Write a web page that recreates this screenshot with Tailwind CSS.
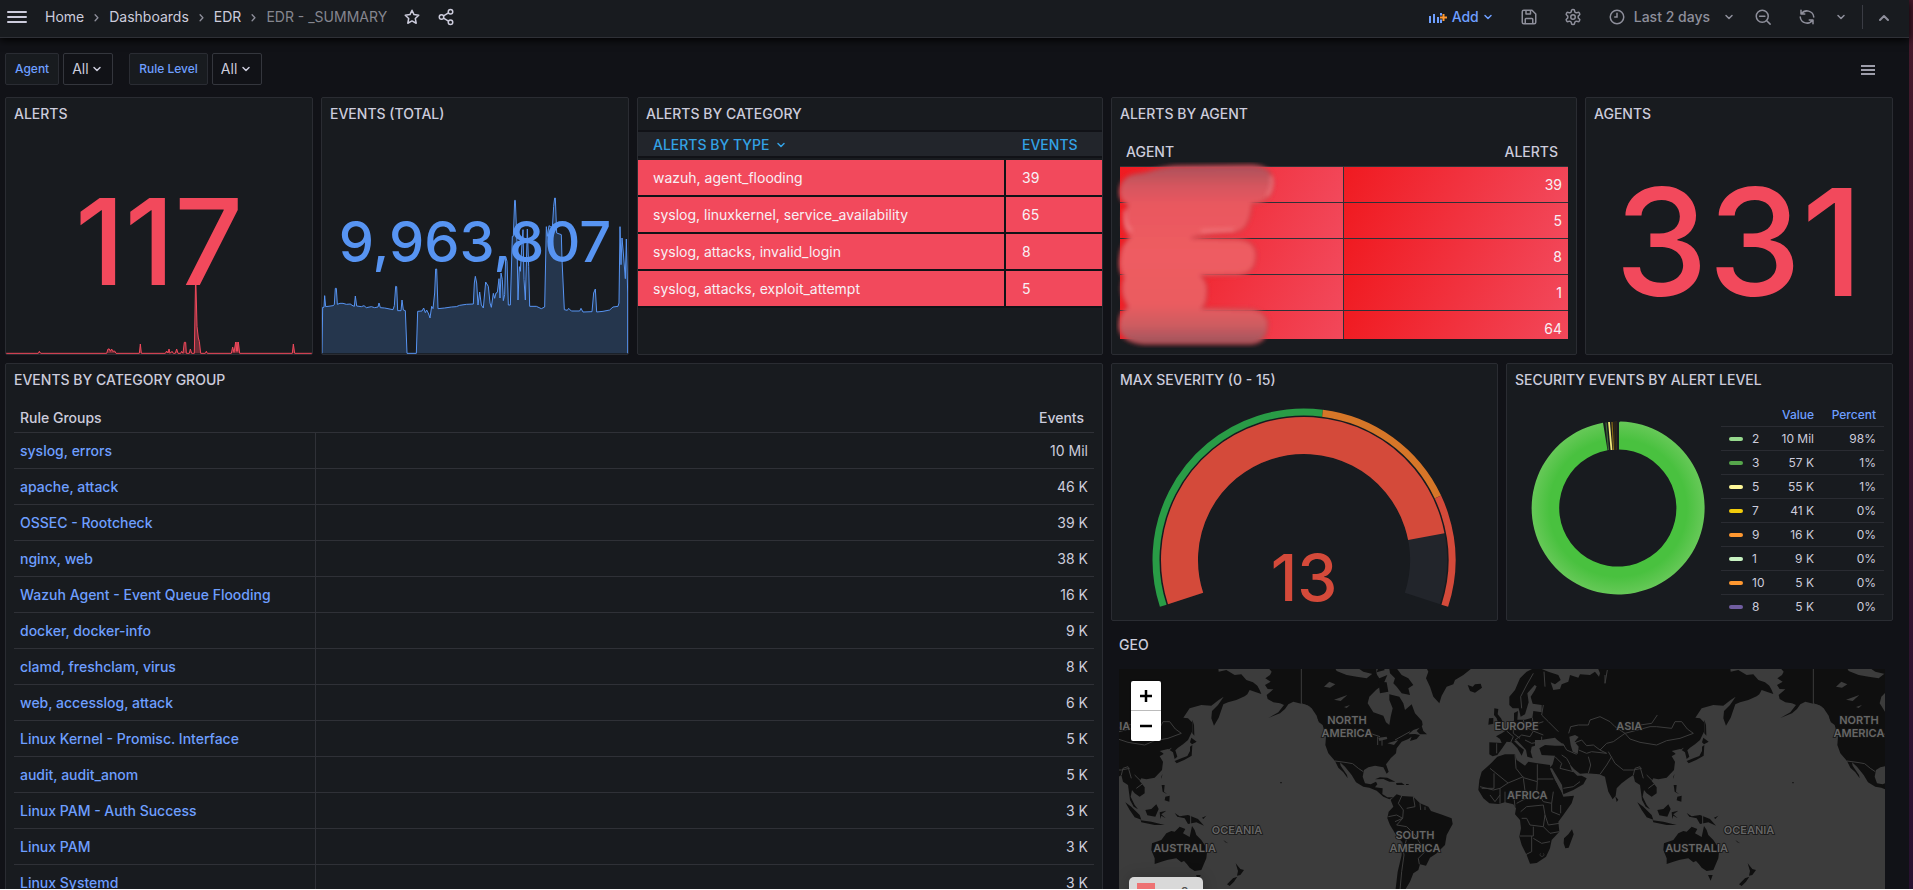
<!DOCTYPE html>
<html lang="en">
<head>
  <meta charset="UTF-8">
  <meta name="viewport" content="width=device-width, initial-scale=1.0">
  <title>EDR - _SUMMARY - Dashboards</title>
  <script src="https://cdn.jsdelivr.net/npm/@tailwindcss/browser@4"></script>
</head>
<body class="flex h-screen overflow-hidden border-b border-white bg-[#111217] font-['Inter',sans-serif] text-sm text-[#ccccdc]">

  <!-- Shared icons -->
  <svg class="hidden">
    <symbol id="chev-down" viewBox="0 0 16 16"><path d="M5 6.500 8 9.500l3-3" fill="none" stroke="currentColor" stroke-width="1.500" stroke-linecap="round" stroke-linejoin="round"/></symbol>
    <symbol id="chev-right" viewBox="0 0 16 16"><path d="M6.500 5 9.500 8.200 6.500 11.400" fill="none" stroke="currentColor" stroke-width="1.400" stroke-linecap="round" stroke-linejoin="round"/></symbol>
  </svg>

  <div class="flex min-w-0 flex-1 flex-col">
    <header class="relative z-10 flex h-[38px] shrink-0 items-center justify-between border-b border-[#2e3036] bg-[#181b1f] pb-[3px] pl-[5px] pr-[17px] shadow-[0_2px_8px_#000]">
      <nav class="flex items-center" aria-label="Breadcrumb">
        <button aria-label="Open menu" class="mr-4">
          <svg class="size-6" viewBox="0 0 24 24" stroke="currentColor" stroke-width="2" stroke-linecap="round"><path d="M3 7h18M3 12h18M3 17h18"/></svg>
        </button>
        <div class="flex items-center gap-[5px]">
          <a href="#">Home</a>
          <svg class="size-[15px] text-[#8e8f9b]"><use href="#chev-right"/></svg>
          <a href="#">Dashboards</a>
          <svg class="size-[15px] text-[#8e8f9b]"><use href="#chev-right"/></svg>
          <a href="#">EDR</a>
          <svg class="size-[15px] text-[#8e8f9b]"><use href="#chev-right"/></svg>
          <span class="text-[#85868f]">EDR - _SUMMARY</span>
        </div>
        <div class="ml-4 flex items-center gap-4">
          <button aria-label="Mark as favorite">
            <svg class="size-[18px]" viewBox="0 0 24 24" fill="none" stroke="currentColor" stroke-width="2" stroke-linejoin="round"><path d="M12 3l2.700 5.800 6.300.8-4.600 4.400 1.200 6.300L12 17.200l-5.600 3.100 1.200-6.300L3 9.600l6.300-.8z"/></svg>
          </button>
          <button aria-label="Share dashboard">
            <svg class="size-[18px]" viewBox="0 0 24 24" fill="none" stroke="currentColor" stroke-width="2"><circle cx="18" cy="5" r="3"/><circle cx="6" cy="12" r="3"/><circle cx="18" cy="19" r="3"/><path d="M8.700 10.500l6.600-4M8.700 13.500l6.600 4"/></svg>
          </button>
        </div>
      </nav>

      <div class="flex items-center text-[#8e8f9b]">
        <button class="flex items-center font-medium text-[#6e9fff]">
          <svg class="mr-1 size-5" viewBox="0 0 20 20" fill="none" stroke="currentColor" stroke-width="2"><path d="M2 9v7M6 7v9M10 10v6M13 12.500V16M13 6v2.500"/><path stroke="#ff9830" d="M12 10.500h7M15.500 7v7"/></svg>
          Add
          <svg class="ml-px size-4"><use href="#chev-down"/></svg>
        </button>
        <div class="ml-6 flex items-center gap-[26px]">
          <button aria-label="Save dashboard">
            <svg class="size-[18px]" viewBox="0 0 24 24" fill="none" stroke="currentColor" stroke-width="2" stroke-linejoin="round"><path d="M5 3h11l5 5v11a2 2 0 0 1-2 2H5a2 2 0 0 1-2-2V5a2 2 0 0 1 2-2zM8 3v5h6V3M7 21v-6a1 1 0 0 1 1-1h8a1 1 0 0 1 1 1v6"/></svg>
          </button>
          <button aria-label="Dashboard settings">
            <svg class="size-[18px]" viewBox="0 0 24 24" fill="none" stroke="currentColor" stroke-width="2"><path d="M12.220 2h-.44a2 2 0 0 0-2 2v.18a2 2 0 0 1-1 1.730l-.43.25a2 2 0 0 1-2 0l-.15-.08a2 2 0 0 0-2.730.73l-.22.38a2 2 0 0 0 .73 2.730l.15.1a2 2 0 0 1 1 1.720v.51a2 2 0 0 1-1 1.740l-.15.09a2 2 0 0 0-.73 2.730l.22.38a2 2 0 0 0 2.730.73l.15-.08a2 2 0 0 1 2 0l.43.25a2 2 0 0 1 1 1.730V20a2 2 0 0 0 2 2h.44a2 2 0 0 0 2-2v-.18a2 2 0 0 1 1-1.730l.43-.25a2 2 0 0 1 2 0l.15.08a2 2 0 0 0 2.730-.73l.22-.39a2 2 0 0 0-.73-2.730l-.15-.08a2 2 0 0 1-1-1.740v-.5a2 2 0 0 1 1-1.740l.15-.09a2 2 0 0 0 .73-2.730l-.22-.38a2 2 0 0 0-2.730-.73l-.15.08a2 2 0 0 1-2 0l-.43-.25a2 2 0 0 1-1-1.730V4a2 2 0 0 0-2-2z"/><circle cx="12" cy="12" r="3"/></svg>
          </button>
          <button class="flex items-center font-medium">
            <svg class="mr-2 size-[18px]" viewBox="0 0 24 24" fill="none" stroke="currentColor" stroke-width="2" stroke-linecap="round"><circle cx="12" cy="12" r="9"/><path d="M12 7v5H9"/></svg>
            Last 2 days
            <svg class="ml-[11px] size-4"><use href="#chev-down"/></svg>
          </button>
        </div>
        <button aria-label="Zoom out" class="ml-[17px]">
          <svg class="size-[18px]" viewBox="0 0 24 24" fill="none" stroke="currentColor" stroke-width="2" stroke-linecap="round"><circle cx="11" cy="11" r="8"/><path d="M17 17l4.500 4.500M7.500 11h7"/></svg>
        </button>
        <button aria-label="Refresh" class="ml-[26px]">
          <svg class="size-[18px]" viewBox="0 0 24 24" fill="none" stroke="currentColor" stroke-width="2" stroke-linecap="round" stroke-linejoin="round"><path d="M4 3v5h5M20 21v-5h-5M4.500 8A9 9 0 0 1 21 12M19.500 16A9 9 0 0 1 3 12"/></svg>
        </button>
        <button aria-label="Refresh interval" class="ml-[17px]">
          <svg class="size-4"><use href="#chev-down"/></svg>
        </button>
        <div class="ml-[13px] h-6 w-px bg-[#3a3c44]"></div>
        <button aria-label="Hide toolbar" class="ml-[13px]">
          <svg class="size-4" viewBox="0 0 16 16" fill="none" stroke="currentColor" stroke-width="2" stroke-linecap="round" stroke-linejoin="round"><path d="M4 11l4-4 4 4"/></svg>
        </button>
      </div>
    </header>

    <main class="flex-1 overflow-y-auto pb-8 pl-[5px] pr-4 [scrollbar-width:none]">
      <!-- Variables -->
      <div class="flex items-center justify-between pb-3 pt-[15px]">
        <div class="flex gap-4">
          <div class="flex gap-1">
            <label for="agent" class="flex h-8 items-center rounded-xs border border-[#2a2c33] bg-[#181b1f] px-[9px] text-xs font-medium text-[#6e9fff]">Agent</label>
            <div class="relative">
              <select id="agent" class="h-8 w-[50px] appearance-none rounded-xs border border-[#34363d] bg-[#111217] pl-2 text-sm"><option>All</option></select>
              <svg class="pointer-events-none absolute right-2 top-2 size-4"><use href="#chev-down"/></svg>
            </div>
          </div>
          <div class="flex gap-1">
            <label for="level" class="flex h-8 items-center rounded-xs border border-[#2a2c33] bg-[#181b1f] px-[9px] text-xs font-medium text-[#6e9fff]">Rule Level</label>
            <div class="relative">
              <select id="level" class="h-8 w-[50px] appearance-none rounded-xs border border-[#34363d] bg-[#111217] pl-2 text-sm"><option>All</option></select>
              <svg class="pointer-events-none absolute right-2 top-2 size-4"><use href="#chev-down"/></svg>
            </div>
          </div>
        </div>
        <button aria-label="Dashboard links" class="mr-[17px]">
          <svg class="size-4" viewBox="0 0 16 16" stroke="currentColor" stroke-width="1.500"><path d="M1 5h14M1 9h14M1 13h14"/></svg>
        </button>
      </div>

      <div class="grid auto-rows-[30px] grid-cols-24 gap-2">

        <section class="relative col-span-4 row-span-7 flex flex-col overflow-hidden rounded-xs border border-[#2a2c32] bg-[#181b1f]">
          <h2 class="flex h-8 shrink-0 items-center px-2 font-medium">ALERTS</h2>
          <div class="flex flex-1 items-center justify-center text-[120px] font-medium leading-none text-[#f2495c] [font-kerning:none]">117</div>
          <svg class="absolute bottom-0 left-0 h-[81px] w-full" viewBox="0 0 918 243" preserveAspectRatio="none">
            <path transform="translate(-18 -280)" fill="#f2495c" fill-opacity=".4" stroke="#f2495c" stroke-width="3" d="M18 521H115L118 515 122 521H320L324 508 328 508 331 515 335 508 338 515 344 514 348 521H418L421 493 424 521H496L500 514 504 520 507 508 510 521 516 515 520 521H526L530 508 534 521H542L545 515 549 521 553 488 557 488 559 521H568L571 508 575 521H583L587 283 591 440 595 475 598 485 602 521H616L619 515 622 521H694L698 502 702 518 707 487 709 515 711 487 713 515 715 487 719 521H877L880 493 884 521H936"/>
          </svg>
        </section>

        <section class="relative col-span-4 row-span-7 flex flex-col overflow-hidden rounded-xs border border-[#2a2c32] bg-[#181b1f]">
          <h2 class="flex h-8 shrink-0 items-center px-2 font-medium">EVENTS (TOTAL)</h2>
          <svg class="absolute bottom-0 left-0 h-[157px] w-full" viewBox="0 0 918 471" preserveAspectRatio="none">
            <path transform="translate(-12 -52)" fill="#5794f2" fill-opacity=".22" stroke="#5794f2" stroke-width="3" stroke-linejoin="round" d="M12 521L14 383 18 383 20 348 23 381 45 378 49 375 52 326 55 326 58 374 66 371 75 371 85 374 98 373 100 376 109 380 112 349 116 379 130 381 138 378 145 384 160 381 170 384 180 382 183 370 187 384 200 385 225 390 229 378 233 320 236 321 239 393 249 393 252 361 256 391 262 393 267 521 295 521 299 395 312 394 317 385 322 399 326 391 332 403 336 415 341 380 345 387 350 340 353 268 356 268 360 387 380 385 400 382 415 381 425 377 445 374 466 373 469 310 472 290 476 310 480 376 485 337 490 376 496 385 503 307 511 320 516 370 520 383 526 341 530 356 534 340 538 338 543 297 546 355 549 280 553 300 556 363 560 345 563 231 567 245 571 376 577 376 583 170 586 170 590 62 592 62 597 190 600 361 604 261 607 275 612 190 615 150 618 300 622 361 628 148 632 260 635 380 655 380 670 387 680 382 685 141 688 170 693 138 703 145 707 80 710 55 712 55 716 160 730 165 732 240 739 390 748 392 752 386 760 394 785 394 789 386 795 397 822 396 827 340 832 328 836 397 855 395 875 391 885 382 900 380 903 370 906 141 909 255 912 175 916 220 922 297 925 178 929 340V521"/>
          </svg>
          <div class="relative flex flex-1 items-center justify-center text-[56px] font-medium leading-none text-[#5794f2]">9,963,807</div>
        </section>

        <section class="col-span-6 row-span-7 overflow-hidden rounded-xs border border-[#2a2c32] bg-[#181b1f]">
          <h2 class="flex h-8 items-center px-2 font-medium">ALERTS BY CATEGORY</h2>
          <table class="w-full border-separate border-spacing-0 text-left">
            <thead class="text-[#33a2e5]">
              <tr class="h-7">
                <th class="border-y-2 border-[#111217] bg-[#22252b] pl-[15px] pt-[2px] font-medium">
                  <span class="flex items-center gap-1">ALERTS BY TYPE <svg class="size-4"><use href="#chev-down"/></svg></span>
                </th>
                <th class="w-24 border-y-2 border-[#111217] bg-[#22252b] pl-4 pt-[2px] font-medium">EVENTS</th>
              </tr>
              <tr class="h-[2px]"><td colspan="2"></td></tr>
            </thead>
            <tbody id="categories" class="text-[#f7f0f5]"></tbody>
          </table>
        </section>

        <section class="col-span-6 row-span-7 rounded-xs border border-[#2a2c32] bg-[#181b1f]">
          <h2 class="flex h-8 items-center px-2 font-medium">ALERTS BY AGENT</h2>
          <div class="relative mx-2">
            <div class="h-[209px] overflow-hidden">
              <table class="w-full table-fixed border-separate border-spacing-0">
                <thead>
                  <tr class="h-9">
                    <th class="px-[6px] pt-2 text-left font-medium">AGENT</th>
                    <th class="px-[10px] pt-2 text-right font-medium">ALERTS</th>
                  </tr>
                </thead>
                <tbody id="agents" class="text-[#f7f0f5]"></tbody>
              </table>
            </div>
            <!-- Redacted agent names -->
            <svg class="absolute -left-1 top-8 h-[186px] w-[164px]" viewBox="0 0 164 186">
              <defs>
                <linearGradient id="smudge" x1="0" y1="0" x2="0" y2="1">
                  <stop offset="0" stop-color="#a9505a"/><stop offset=".12" stop-color="#d6565e"/><stop offset=".22" stop-color="#e9585f"/>
                  <stop offset=".5" stop-color="#ee5c62"/><stop offset=".78" stop-color="#ea5c61"/><stop offset=".9" stop-color="#cc5b60"/><stop offset="1" stop-color="#9d555c"/>
                </linearGradient>
                <filter id="soft"><feGaussianBlur stdDeviation="2"/></filter>
              </defs>
              <path filter="url(#soft)" fill="url(#smudge)" stroke="#c83a42" stroke-width="1.500" d="M20 12C35 11 40 5 60 4L135 3Q158 4 157 22 156 41 136 42 134 66 122 70 95 71 75 76L120 77Q141 78 140 95 139 112 122 113L85 114Q92 120 91 130 91 142 86 146L135 147Q153 150 152 164 151 181 134 182L28 182Q4 180 3 164 3 150 12 145 2 130 8 115 2 108 4 95 5 82 14 75 6 68 8 56 9 48 12 43 2 38 4 27 6 14 20 12Z"/>
              <path filter="url(#soft)" fill="none" stroke="#f58087" stroke-width="2" d="M155 14Q158 25 151 34M9 48Q8 64 16 69M85 69 118 68"/>
            </svg>
          </div>
        </section>

        <section class="col-span-4 row-span-7 flex flex-col rounded-xs border border-[#2a2c32] bg-[#181b1f]">
          <h2 class="flex h-8 shrink-0 items-center px-2 font-medium">AGENTS</h2>
          <div class="flex flex-1 items-center justify-center text-[149px] font-medium leading-none text-[#f2495c] [font-kerning:none]">331</div>
        </section>

        <section class="col-span-14 row-span-16 overflow-hidden rounded-xs border border-[#2a2c32] bg-[#181b1f] px-2">
          <h2 class="flex h-8 items-center font-medium">EVENTS BY CATEGORY GROUP</h2>
          <table class="w-full border-separate border-spacing-0">
            <thead>
              <tr class="h-[37px]">
                <th class="w-[302px] border-b border-[#2f3137] px-[6px] pt-2 text-left font-medium">Rule Groups</th>
                <th class="border-b border-[#2f3137] px-[10px] pt-2 text-right font-medium">Events</th>
              </tr>
            </thead>
            <tbody id="groups"></tbody>
          </table>
        </section>

        <section class="col-span-5 row-span-7 rounded-xs border border-[#2a2c32] bg-[#181b1f]">
          <h2 class="flex h-8 items-center px-2 font-medium">MAX SEVERITY (0 - 15)</h2>
          <!-- 216 degree gauge, thresholds at 8 and 12 -->
          <svg class="mx-auto mt-3 h-[204px] w-[306px] overflow-visible" viewBox="0 0 306 204">
            <g fill="none" transform="rotate(162 152 152)">
              <circle cx="152" cy="152" r="148" pathLength="360" stroke-width="7" stroke="#299c46" stroke-dasharray="115.200 360"/>
              <circle cx="152" cy="152" r="148" pathLength="360" stroke-width="7" stroke="#d67628" stroke-dasharray="57.600 360" stroke-dashoffset="-115.200"/>
              <circle cx="152" cy="152" r="148" pathLength="360" stroke-width="7" stroke="#d44a3a" stroke-dasharray="43.200 360" stroke-dashoffset="-172.800"/>
              <circle cx="152" cy="152" r="124.500" pathLength="360" stroke-width="37" stroke="#22252b" stroke-dasharray="216 360"/>
              <circle cx="152" cy="152" r="124.500" pathLength="360" stroke-width="37" stroke="#d44a3a" stroke-dasharray="187.200 360"/>
            </g>
            <text x="152" y="193" text-anchor="middle" class="text-[64px] font-medium [font-kerning:none]" fill="#d44a3a">13</text>
          </svg>
        </section>

        <section class="col-span-5 row-span-7 rounded-xs border border-[#2a2c32] bg-[#181b1f]">
          <h2 class="flex h-8 items-center px-2 font-medium">SECURITY EVENTS BY ALERT LEVEL</h2>
          <div class="flex items-start justify-between pl-[23px] pr-2">
            <svg class="mt-6 size-[176px]" viewBox="-88 -88 176 176">
              <defs>
                <radialGradient id="pie" gradientUnits="userSpaceOnUse" cx="0" cy="0" r="88">
                  <stop offset=".78" stop-color="#49c13f"/><stop offset="1" stop-color="#69c95a"/>
                </radialGradient>
              </defs>
              <path fill="url(#pie)" d="M2.500-86.500A86.500 86.500 0 1 1-15-85.200L-10.500-57.700A58.600 58.600 0 1 0 1-58.600V-85Q1-86.500 2.500-86.500Z"/>
              <path stroke="#3d6b35" stroke-width="1.200" d="M-12-85.500-9.500-58"/>
              <path stroke="#f3e77c" stroke-width="1.800" d="M-9-86-6.500-58"/>
              <path stroke="#8a6b14" stroke-width="1.200" d="M-6-86-4.500-58"/>
              <path stroke="#3a2a14" d="M-4-86.500-3-58M-2-87-1.500-58"/>
            </svg>
            <table class="mt-2 w-[163px] border-separate border-spacing-0 text-right text-xs">
              <thead class="font-medium text-[#6e9fff]">
                <tr class="h-[22px]">
                  <th class="w-5"></th><th class="w-6"></th>
                  <th class="pr-2 font-medium">Value</th>
                  <th class="w-[62px] pr-2 font-medium">Percent</th>
                </tr>
              </thead>
              <tbody id="levels"></tbody>
            </table>
          </div>
        </section>

        <section class="col-span-10 row-span-9 overflow-hidden px-2">
          <h2 class="mb-2 flex h-8 items-center font-medium">GEO</h2>
          <div class="relative overflow-hidden bg-[#3c3c3c]">
            <svg class="block w-full" viewBox="57 132 2298 840">
              <defs>
                <g id="world">
                  <g fill="#0f0f0f">
                    <path d="M497 120L515 140 510 150 496 160 512 170 495 180 503 192 520 193 500 210 503 222 520 232 540 235 552 240 535 262 505 279 540 265 555 252 565 238 580 230 604 236 620 240 635 250 650 272 655 290 668 300 678 335 676 360 685 385 705 408 715 428 730 442 743 460 741 450 722 422 720 412 735 425 755 450 768 472 790 485 808 488 830 497 850 515 868 523 880 517 862 517 847 507 848 490 825 487 832 478 828 470 812 478 795 475 788 455 792 435 805 427 825 422 850 427 860 446 866 440 858 418 872 400 888 385 890 370 905 350 925 342 935 335 930 348 950 342 960 330 945 327 925 328 940 315 960 308 968 300 966 288 945 265 935 238 915 255 910 235 898 215 868 208 868 225 878 250 872 275 868 300 858 292 850 272 820 262 803 235 808 215 828 195 850 178 862 150 838 160 825 140 800 160 770 155 740 150 710 138 700 120Z"/>
                    <path d="M950 318L965 302 970 318 981 328 960 328ZM866 120L890 130 905 150 925 160 940 180 925 190 930 210 905 205 890 185 880 175 885 160 870 145ZM838 120 855 135 830 142ZM835 170 860 172 865 200 840 205ZM760 120 790 140 830 150 828 120Z"/>
                    <path d="M975 120L985 140 978 160 990 185 1000 215 1018 235 1025 212 1040 185 1060 178 1065 165 1090 150 1115 130 1125 120ZM1103 180L1118 185 1125 178 1142 176 1146 188 1125 203 1110 198Z"/>
                    <path d="M825 463L840 457 862 458 886 470 868 470 850 462ZM888 474L905 473 914 480 890 480ZM918 477h8v3h-8ZM541 471h4v4h-4Z"/>
                    <path d="M872 525L890 508 905 513 940 515 960 535 985 545 993 558 1020 567 1055 580 1058 597 1040 630 1035 660 1010 685 990 698 978 722 960 718 955 735 940 745 930 770 915 795 905 850 890 850 886 800 893 740 905 690 905 650 885 625 870 600 862 580 866 560 880 545Z"/>
                    <path d="M1183 250L1195 252 1193 268 1203 280 1212 300 1208 308 1186 312 1195 295 1190 280 1182 270ZM1167 280L1180 279 1180 296 1165 299Z"/>
                  </g>
                  <g fill="#0f0f0f" transform="translate(1200 0)">
                    <path d="M-32 352L5 354 0 342-12 334 5 325 20 315 30 305 40 295 42 285 42 264 54 258 52 284 75 284 97 278 100 258 125 262 125 240 98 236 92 215 105 195 110 184 104 180 82 205 86 232 75 268 62 275 56 250 38 250 28 240 28 215 45 195 60 160 80 140 100 130 125 132 145 140 175 150 182 165 165 178 152 172 160 195 180 192 185 178 205 170 210 150 235 158 240 148 270 150 285 140 297 155 300 145 290 120 690 120 692 140 715 135 740 150 760 148 775 165 795 172 808 182 815 195 820 207 800 200 785 195 778 208 770 214 745 225 720 232 706 238 700 255 692 278 678 302 670 280 672 258 690 240 707 215 692 225 670 242 640 240 605 250 586 278 600 280 612 292 612 320 600 345 585 358 570 368 562 376 568 395 560 402 555 382 540 372 515 378 528 386 515 394 525 410 522 435 500 458 475 463 460 460 455 468 470 487 470 505 455 515 440 505 432 495 428 515 440 540 450 553 437 545 426 525 420 480 405 470 400 450 385 460 365 475 350 490 347 512 338 523 325 500 318 470 315 455 298 448 260 445 240 446 222 432 208 416 215 436 232 452 245 452 260 460 250 478 220 495 190 508 180 480 165 450 150 428 158 418 165 392 125 390 118 370 135 360 165 362 195 362 172 345 165 338 140 342 125 345 105 345 105 362 95 365 92 380 98 400 82 395 78 375 62 358 50 346 42 348 58 364 72 374 65 392 52 370 35 352 20 350 5 372-8 390-22 394-32 388Z"/>
                    <path d="M-8 395L15 388 45 388 50 405 75 422 85 410 112 415 150 420 152 436 165 465 180 490 190 515 222 512 215 535 190 570 175 590 178 620 155 645 150 670 138 695 110 714 90 716 80 690 65 660 58 635 63 610 60 585 45 568 48 550 40 538 15 532-5 537-32 535-50 520-65 495-62 465-55 440-30 418Z"/>
                    <path d="M192 640L205 628 216 613 221 628 206 668 196 670 191 655ZM346 514L355 524 350 531ZM520 455L523 447 521 462ZM560 408L580 400 598 393 606 378 606 365 613 360 611 392 590 404 566 415ZM606 352L610 338 626 350 612 358ZM613 284L618 300 619 332 613 325Z"/>
                    <path d="M521 480L530 480 528 500 538 508 524 500ZM532 515L545 512 544 530 530 526ZM412 532L430 545 455 570 460 584 440 577 425 555ZM458 586L490 590 530 600 500 600 460 592ZM472 555L490 552 505 538 512 552 502 575 478 571ZM515 562L535 557 520 568 533 580 520 572 517 582ZM560 564L575 574 600 570 630 582 648 602 625 592 600 597 590 580 568 575ZM642 578 655 572 646 582Z"/>
                    <path d="M492 655L520 645 535 625 550 618 560 620 575 605 592 612 585 625 605 636 612 603 620 615 625 630 640 645 658 672 655 700 640 735 620 738 605 728 597 718 588 708 580 712 565 700 540 704 520 710 500 717 500 700 490 675ZM624 750L638 750 632 767ZM743 715L757 732 768 735 757 750 747 752 750 738ZM748 755L738 770 725 783 717 778 735 760ZM706 645L720 655 712 652Z"/>
                  </g>
                  <!-- Lakes and inland seas -->
                  <g fill="#3c3c3c">
                    <path d="M672 185L688 170 706 178 690 188ZM702 224L742 210 722 228ZM732 246L750 240 740 249ZM835 338L860 335 862 342 838 348ZM862 355L895 345 882 360ZM1408 335L1425 330 1436 336 1424 350 1436 365 1433 387 1418 380 1412 360ZM1350 430L1356 430 1386 480 1390 508 1378 490Z"/>
                  </g>
                  <g fill="none" stroke="#3c3c3c" stroke-width="3" stroke-linejoin="round">
                    <path d="M604 120V236L628 245 655 290M833 335V360M846 340V362M705 408L735 412 758 416 775 430 790 440M810 325L840 335M885 345 930 320"/>
                    <path d="M905 513L895 535 910 555 908 580 885 590M865 575L890 570 908 580 890 600 920 605 945 630 960 655 975 680 955 700 958 718M905 650L912 690 905 740 895 850M920 640L915 660 930 680M940 515L945 545 920 550M960 535 962 555M975 545V555"/>
                    <path d="M1406 325L1412 305 1435 300 1465 300 1470 285 1500 275 1530 290 1545 305 1575 325 1540 350 1520 355 1500 375 1480 360 1460 362 1445 345 1420 355M1575 325L1590 342 1620 352 1670 360 1700 347 1740 340 1780 325 1762 312 1745 290 1725 290 1715 310 1670 305 1650 305 1575 325M1525 380L1545 415 1570 435 1600 435 1625 430M1620 300L1655 295 1672 270M1515 150V175L1522 135"/>
                    <path d="M1436 375L1460 385 1475 380 1520 385 1500 375M1465 445L1472 420 1465 395M1500 448L1520 420 1535 395M1385 390L1400 400 1410 418M1365 395L1385 415 1380 430 1420 440M1390 490L1420 485 1440 470M1600 450L1605 430 1620 425 1630 460M1640 450 1665 475 1645 490M1808 570V597M1725 385 1750 370"/>
                    <path d="M1245 388L1248 430 1270 458 1312 470V418M1312 462H1360M1170 430L1224 474 1270 455M1182 445V490H1145M1140 485 1180 495 1200 490 1224 474M1200 490V535M1215 500V535M1245 545 1240 500M1270 460 1278 520 1250 535M1312 470L1310 500 1330 530 1355 535 1360 500M1355 535V560L1380 570M1265 580H1280L1290 600 1330 605 1335 570 1330 540 1280 545 1262 560M1260 633H1300V605M1295 633V680L1275 690M1300 640 1325 655 1350 650M1330 605 1350 625 1378 620M1335 570 1345 600 1378 595M1382 540V565M1170 510 1185 530 1200 510"/>
                    <path d="M1265 250L1262 215 1280 180 1300 145M1332 140 1335 185M1330 240L1325 270 1345 290 1375 320M1297 278L1300 300 1330 290M1240 295V325L1260 340M1220 318 1240 335 1232 352M1270 285 1275 305 1300 318 1290 335 1265 330 1245 345M1300 318 1330 330M1325 335V350L1295 355 1275 345M1388 355 1400 375 1430 388M1190 355V385"/>
                    <path stroke-width="2" d="M1323 685a6 5 0 1 0 6 0"/>
                  </g>
                  <g class="text-[33px] font-semibold" fill="#666" stroke="#161616" stroke-width="5" paint-order="stroke" text-anchor="middle">
                    <text x="741" y="298">NORTH</text>
                    <text x="741" y="335">AMERICA</text>
                    <text x="945" y="643">SOUTH</text>
                    <text x="945" y="681">AMERICA</text>
                    <text x="1250" y="316">EUROPE</text>
                    <text x="1282" y="521">AFRICA</text>
                    <text x="1588" y="316">ASIA</text>
                    <text x="1790" y="682">AUSTRALIA</text>
                    <text x="1947" y="626">OCEANIA</text>
                  </g>
                </g>
              </defs>
              <use href="#world" x="-1536"/>
              <use href="#world"/>
              <use href="#world" x="1536"/>
            </svg>
            <div class="absolute left-3 top-3 w-[30px] divide-y divide-[#bbb] rounded-xs bg-white text-black shadow-[0_0_2px_#000]">
              <button aria-label="Zoom in" class="flex h-[30px] w-full items-center justify-center">
                <svg class="size-4" viewBox="0 0 16 16" stroke="currentColor" stroke-width="2.500"><path d="M2 8h12M8 2v12"/></svg>
              </button>
              <button aria-label="Zoom out of map" class="flex h-[30px] w-full items-center justify-center">
                <svg class="size-4" viewBox="0 0 16 16" stroke="currentColor" stroke-width="2.500"><path d="M2 8h12"/></svg>
              </button>
            </div>
            <div class="absolute left-[10px] top-[208px] flex w-[74px] items-start gap-3 rounded-[5px] bg-[#d9d9d9] px-2 py-[6px] text-[#555] shadow-[0_0_15px_#0003]">
              <span class="size-[18px] bg-[#ee7273]"></span>&lt; 0
            </div>
          </div>
        </section>
      </div>
    </main>
  </div>

  <div class="w-1 shrink-0 bg-linear-to-b from-[#45192a] to-[#281130]"></div>

  <script>
    const categories = [
      ['wazuh, agent_flooding', 39],
      ['syslog, linuxkernel, service_availability', 65],
      ['syslog, attacks, invalid_login', 8],
      ['syslog, attacks, exploit_attempt', 5],
    ];
    const agents = [39, 5, 8, 1, 64];
    const groups = [
      ['syslog, errors', '10 Mil'],
      ['apache, attack', '46 K'],
      ['OSSEC - Rootcheck', '39 K'],
      ['nginx, web', '38 K'],
      ['Wazuh Agent - Event Queue Flooding', '16 K'],
      ['docker, docker-info', '9 K'],
      ['clamd, freshclam, virus', '8 K'],
      ['web, accesslog, attack', '6 K'],
      ['Linux Kernel - Promisc. Interface', '5 K'],
      ['audit, audit_anom', '5 K'],
      ['Linux PAM - Auth Success', '3 K'],
      ['Linux PAM', '3 K'],
      ['Linux Systemd', '3 K'],
    ];
    const levels = [
      ['#96d98d', '2', '10 Mil', '98%'],
      ['#56a64b', '3', '57 K', '1%'],
      ['#fff899', '5', '55 K', '1%'],
      ['#f2cc0c', '7', '41 K', '0%'],
      ['#ff9830', '9', '16 K', '0%'],
      ['#c8f2c2', '1', '9 K', '0%'],
      ['#ff9830', '10', '5 K', '0%'],
      ['#705da0', '8', '5 K', '0%'],
    ];

    document.getElementById('categories').innerHTML = categories.map(([name, count]) => `
      <tr class="h-[37px]">
        <td class="border-b-2 border-r-2 border-[#111217] bg-[#f2495c] pl-[15px]">${name}</td>
        <td class="border-b-2 border-[#111217] bg-[#f2495c] pl-4">${count}</td>
      </tr>`).join('');

    document.getElementById('agents').innerHTML = agents.map(count => `
      <tr class="h-9">
        <td class="border-r border-t border-[#2f3137] bg-[linear-gradient(120deg,#f01a20,#f2495c)]"></td>
        <td class="border-t border-[#2f3137] bg-[linear-gradient(120deg,#f01a20,#f2495c)] pr-[6px] text-right">${count}</td>
      </tr>`).join('');

    document.getElementById('groups').innerHTML = groups.map(([name, count]) => `
      <tr class="h-9">
        <td class="border-b border-r border-[#2f3137] px-[6px] font-medium text-[#6e9fff]"><a href="#">${name}</a></td>
        <td class="border-b border-[#2f3137] px-[6px] text-right">${count}</td>
      </tr>`).join('');

    document.getElementById('levels').innerHTML = levels.map(([color, name, value, percent]) => `
      <tr class="h-6">
        <td class="border-t border-[#2a2c32] pl-2"><span class="block h-1 w-[14px] rounded-full" style="background:${color}"></span></td>
        <td class="border-t border-[#2a2c32] pl-[9px] text-left">${name}</td>
        <td class="border-t border-[#2a2c32] pr-2">${value}</td>
        <td class="border-t border-[#2a2c32] pr-2">${percent}</td>
      </tr>`).join('');
  </script>
</body>
</html>
